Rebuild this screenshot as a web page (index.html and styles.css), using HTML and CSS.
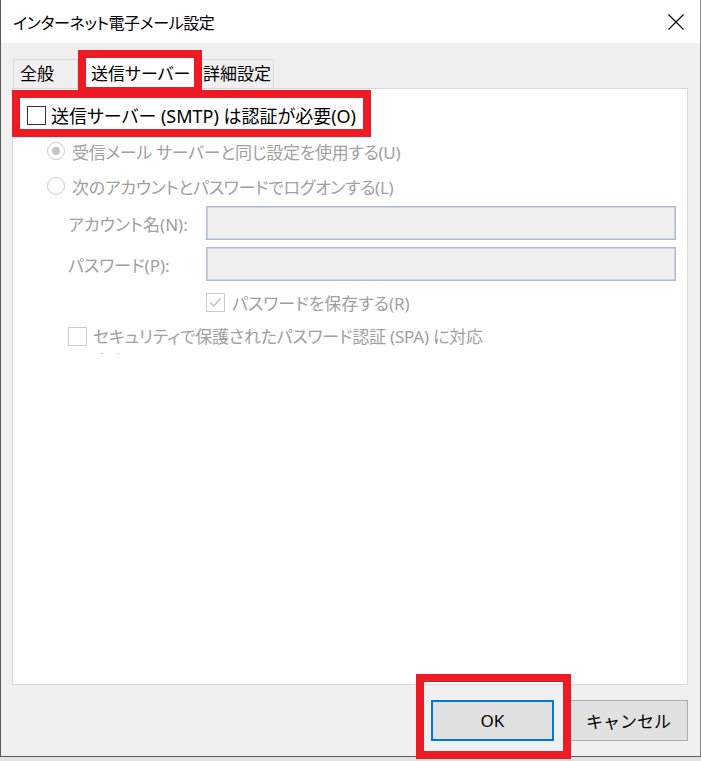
FILE: index.html
```html
<!DOCTYPE html>
<html lang="ja">
<head>
<meta charset="utf-8">
<title>インターネット電子メール設定</title>
<link rel="stylesheet" href="styles.css">
</head>
<body>
<div class="window">
  <div class="titlebar">
    <span class="title">インターネット電子メール設定</span>
    <svg class="close" viewBox="0 0 16 16" width="16" height="16" aria-hidden="true">
      <path d="M0.5 0.5 L15.5 15.5 M15.5 0.5 L0.5 15.5" stroke="#000" stroke-width="1.1" fill="none"/>
    </svg>
  </div>
  <div class="tabs">
    <div class="tab tab-general">全般</div>
    <div class="tab tab-active">送信サーバー</div>
    <div class="tab tab-detail">詳細設定</div>
  </div>
  <div class="panel">
    <div class="row row-auth">
      <span class="cb cb-enabled"></span>
      <span class="lbl lbl-enabled">送信サーバー (SMTP) は認証が必要(O)</span>
    </div>
    <div class="row row-radio row-radio1">
      <span class="radio"><span class="radio-dot"></span></span>
      <span class="lbl">受信メール サーバーと同じ設定を使用する(U)</span>
    </div>
    <div class="row row-radio row-radio2">
      <span class="radio"></span>
      <span class="lbl">次のアカウントとパスワードでログオンする(L)</span>
    </div>
    <div class="field-row field-account">
      <span class="field-label">アカウント名(N):</span>
      <span class="input"></span>
    </div>
    <div class="field-row field-password">
      <span class="field-label">パスワード(P):</span>
      <span class="input"></span>
    </div>
    <div class="row row-save">
      <span class="cb cb-disabled">
        <svg viewBox="0 0 19 19" width="17" height="17" aria-hidden="true"><path d="M3.5 9.5 L7.5 13.5 L15 5" stroke="#c2c2c2" stroke-width="1.6" fill="none"/></svg>
      </span>
      <span class="lbl">パスワードを保存する(R)</span>
    </div>
    <div class="row-spa">
      <span class="cb cb-disabled cb-spa"></span>
      <span class="lbl spa-text">セキュリティで保護されたパスワード認証 (SPA) に対応<br>する(Q)</span>
    </div>
  </div>
  <div class="buttons">
    <button class="btn btn-ok">OK</button>
    <button class="btn btn-cancel">キャンセル</button>
  </div>
  <div class="mark mark-tab"></div>
  <div class="mark mark-auth"></div>
  <div class="mark mark-ok"></div>
</div>
</body>
</html>
```

FILE: styles.css
```css
html, body {
  margin: 0;
  padding: 0;
}
body {
  width: 701px;
  height: 761px;
  overflow: hidden;
  background: #e2e2e2;
  font-family: "Noto Sans", "Noto Sans CJK JP", sans-serif;
  font-feature-settings: "palt" 1;
  color: #000;
}
.window {
  position: relative;
  width: 701px;
  height: 757px;
  box-sizing: border-box;
  border-left: 1px solid #5a5a5a;
  border-right: 1px solid #8a8a8a;
  border-bottom: 1px solid #5a5a5a;
  background: #f0f0f0;
  display: flex;
  flex-direction: column;
}
.titlebar {
  height: 43px;
  flex: none;
  background: #fff;
  display: flex;
  align-items: center;
  justify-content: space-between;
  padding: 0 16px 0 12px;
}
.title {
  font-size: 16px;
  letter-spacing: -0.4px;
}
.close {
  display: block;
}
.tabs {
  position: relative;
  z-index: 1;
  display: flex;
  align-items: flex-end;
  height: 35px;
  margin: 10px 0 0 12px;
}
.tab {
  box-sizing: border-box;
  height: 29px;
  border: 1px solid #d9d9d9;
  border-bottom: none;
  background: #f0f0f0;
  padding-left: 6px;
  font-size: 17px;
  line-height: 28px;
  white-space: nowrap;
}
.tab-general { width: 65px; }
.tab-active {
  width: 118px;
  height: 36px;
  margin-bottom: -1px;
  padding: 6px 0 0 12px;
  background: #fff;
}
.tab-detail { width: 78px; }
.panel {
  box-sizing: border-box;
  height: 597px;
  margin: 0 12px 0 11px;
  border: 1px solid #d9d9d9;
  background: #fff;
  display: flex;
  flex-direction: column;
  padding-top: 14px;
  font-size: 17px;
  color: #a0a0a0;
}
.row {
  display: flex;
  align-items: center;
  height: 24px;
  white-space: nowrap;
}
.row-auth {
  margin-left: 14px;
  gap: 5px;
}
.lbl-enabled {
  color: #000;
  font-size: 18px;
}
.cb {
  box-sizing: border-box;
  width: 19px;
  height: 19px;
  flex: none;
  background: #fff;
  display: flex;
  align-items: center;
  justify-content: center;
}
.cb-enabled { border: 1px solid #333; }
.cb-disabled { border: 1px solid #cccccc; }
.row-radio {
  margin-left: 34px;
  gap: 7px;
  letter-spacing: -0.3px;
}
.row-radio1 { margin-top: 12px; }
.row-radio2 { margin-top: 11px; }
.radio {
  box-sizing: border-box;
  width: 18px;
  height: 18px;
  border: 1px solid #cccccc;
  border-radius: 50%;
  background: #fff;
  display: flex;
  align-items: center;
  justify-content: center;
}
.radio-dot {
  width: 8px;
  height: 8px;
  border-radius: 50%;
  background: #c4c4c4;
}
.field-row {
  display: flex;
  align-items: center;
  height: 34px;
  margin-left: 55px;
}
.field-account { margin-top: 8px; }
.field-password { margin-top: 7px; }
.field-label {
  width: 138px;
  flex: none;
  white-space: nowrap;
}
.input {
  box-sizing: border-box;
  width: 470px;
  height: 34px;
  background: #f0f0f0;
  border: 1px solid #a9b8cc;
  box-shadow: inset 0 0 0 1px #ccd6e2;
}
.row-save {
  margin: 9px 0 0 193px;
  gap: 7px;
}
.row-spa {
  display: flex;
  align-items: flex-start;
  margin: 11px 0 0 55px;
  gap: 6px;
}
.cb-spa { margin-top: 2px; }
.spa-text {
  display: block;
  height: 29px;
  overflow: hidden;
  line-height: 24px;
  white-space: nowrap;
  letter-spacing: -0.2px;
}
.buttons {
  display: flex;
  justify-content: flex-end;
  gap: 15px;
  margin-top: 15px;
  padding-right: 12px;
}
.btn {
  box-sizing: border-box;
  height: 41px;
  background: #e1e1e1;
  font-family: inherit;
  font-size: 17px;
  color: #000;
  padding: 0;
  margin: 0;
}
.btn-ok {
  width: 123px;
  border: 2px solid #0078d7;
}
.btn-cancel {
  width: 119px;
  border: 1px solid #adadad;
}
.mark {
  position: absolute;
  box-sizing: border-box;
  border: 8px solid #ed1c24;
  z-index: 2;
}
.mark-tab {
  left: 77px;
  top: 50px;
  width: 124px;
  height: 45px;
}
.mark-auth {
  left: 11px;
  top: 90px;
  width: 359px;
  height: 47px;
}
.mark-ok {
  left: 415px;
  top: 674px;
  width: 155px;
  height: 85px;
}
```
